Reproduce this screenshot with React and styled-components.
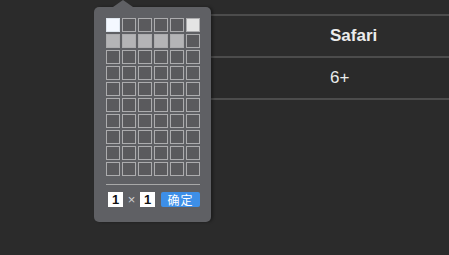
import React from "react";
import styled, { createGlobalStyle } from "styled-components";

const GlobalStyle = createGlobalStyle`
  html, body {
    margin: 0;
    padding: 0;
    background: #2b2b2b;
    font-family: "Liberation Sans", Arial, sans-serif;
  }
`;

const Page = styled.div`
  position: relative;
  width: 449px;
  height: 255px;
  overflow: hidden;
  background: #2b2b2b;
`;

const Table = styled.div`
  margin: 14px 0 0 210px;
  width: 260px;
  border-top: 2px solid #4c4c4c;
`;

const Row = styled.div`
  display: grid;
  grid-template-columns: 120px 1fr;
  height: 40px;
  align-items: center;
  border-bottom: 2px solid #4c4c4c;
  background: ${({ $head }) => ($head ? "#2c2c2c" : "#2a2a2a")};
`;

const Cell = styled.div`
  color: #ececec;
  font-size: 17px;
  font-weight: ${({ $bold }) => ($bold ? 700 : 400)};
`;

const Popover = styled.div`
  position: absolute;
  left: 94px;
  top: 7px;
  width: 117px;
  box-sizing: border-box;
  padding: 11px 11px 15px 12px;
  background: #5f6064;
  border-radius: 5px;
  box-shadow: 2px 0 3px rgba(0, 0, 0, 0.35);

  &::before {
    content: "";
    position: absolute;
    top: -7px;
    left: 19px;
    border-left: 10px solid transparent;
    border-right: 10px solid transparent;
    border-bottom: 7px solid #5f6064;
  }
`;

const Grid = styled.div`
  display: grid;
  grid-template-columns: repeat(6, 14px);
  grid-auto-rows: 14px;
  gap: 2px;
`;

const Square = styled.div`
  box-sizing: border-box;
  border: 1px solid ${({ $tone }) => ($tone === "white" ? "#dfe6ee" : "#acacae")};
  background: ${({ $tone }) =>
    $tone === "white"
      ? "#f4f8ff"
      : $tone === "light"
      ? "#e4e4e4"
      : $tone === "sel"
      ? "#b4b4b6"
      : "#5a5a5d"};
`;

const Divider = styled.div`
  height: 1px;
  width: 94px;
  background: #a8a8a8;
  margin: 8px 0 7px;
`;

const Footer = styled.div`
  display: flex;
  align-items: center;
  padding-left: 2px;
`;

const NumBox = styled.div`
  width: 15px;
  height: 15px;
  background: #fff;
  color: #111;
  font-size: 13px;
  font-weight: 700;
  display: flex;
  align-items: center;
  justify-content: center;
`;

const Times = styled.span`
  width: 17px;
  text-align: center;
  color: #d0d0d0;
  font-size: 13px;
`;

const Confirm = styled.button`
  margin-left: 6px;
  width: 39px;
  height: 15px;
  padding: 0;
  border: none;
  border-radius: 2px;
  background: #3d8fe8;
  color: #fff;
  font-size: 12px;
  line-height: 15px;
  font-family: "Noto Sans CJK SC", sans-serif;
  letter-spacing: 1px;
`;

const toneFor = (r, c) => {
  if (r === 0 && c === 0) return "white";
  if (r === 0 && c === 5) return "light";
  if (r === 1 && c < 5) return "sel";
  return "dark";
};

function App() {
  const cells = [];
  for (let r = 0; r < 10; r++) {
    for (let c = 0; c < 6; c++) {
      cells.push(<Square key={`${r}-${c}`} $tone={toneFor(r, c)} />);
    }
  }

  return (
    <Page>
      <GlobalStyle />
      <Table>
        <Row $head>
          <span />
          <Cell $bold>Safari</Cell>
        </Row>
        <Row>
          <span />
          <Cell>6+</Cell>
        </Row>
      </Table>
      <Popover>
        <Grid>{cells}</Grid>
        <Divider />
        <Footer>
          <NumBox>1</NumBox>
          <Times>×</Times>
          <NumBox>1</NumBox>
          <Confirm>确定</Confirm>
        </Footer>
      </Popover>
    </Page>
  );
}

export default App;
